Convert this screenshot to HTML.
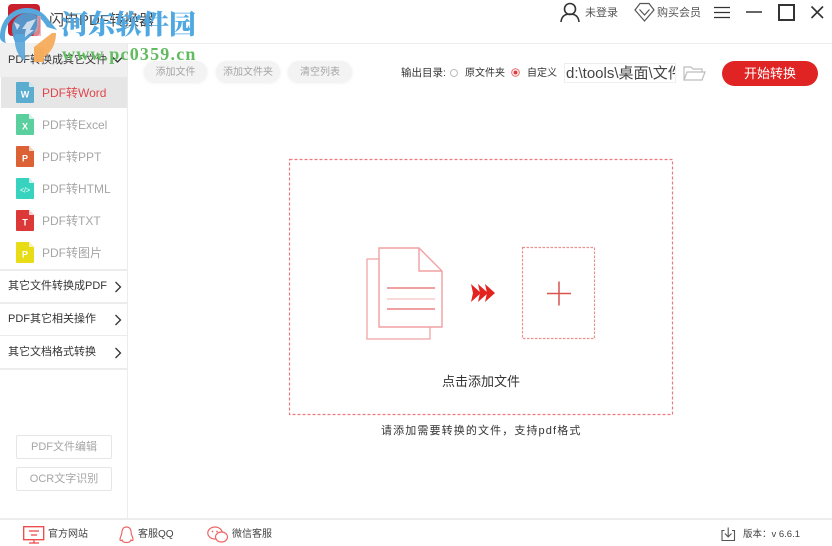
<!DOCTYPE html>
<html lang="zh">
<head>
<meta charset="utf-8">
<style>
html,body{margin:0;padding:0;background:#fff}
body{width:832px;height:546px;position:relative;overflow:hidden;font-family:"Liberation Sans","Noto Sans CJK SC",sans-serif;color:#333}
#w{position:absolute;left:0;top:0;width:832px;height:546px;filter:blur(.3px)}
.a{position:absolute;white-space:nowrap;line-height:1}
.tool{position:absolute;top:61px;height:21px;border-radius:11px;background:#f3f3f3;box-shadow:0 1px 3px rgba(0,0,0,.08);color:#a5a5a5;font-size:10px;line-height:24px;text-align:center}
.item{position:absolute;left:42px;font-size:12px;line-height:1;color:#a5a5a5;white-space:nowrap}
.sec{position:absolute;left:8px;font-size:11px;line-height:1;color:#333;white-space:nowrap}
.line{position:absolute;left:0;width:127px;height:1px;background:#ececec}
.sb{position:absolute;left:16px;width:94px;height:22px;border:1px solid #e6e6e6;border-radius:2px;color:#a5a5a5;font-size:11px;line-height:23px;text-align:center}
svg{position:absolute;overflow:visible}
</style>
</head>
<body>
<div id="w">
<!-- structure -->
<div class="a" style="left:0;top:43px;width:832px;height:1px;background:#eee"></div>
<div class="a" style="left:127px;top:43px;width:1px;height:475px;background:#ececec"></div>
<div class="a" style="left:0;top:44px;width:127px;height:33px;background:#f0f0f0"></div>
<div class="a" style="left:1px;top:77px;width:126px;height:31px;background:#e6e6e6"></div>
<div class="a" style="left:0;top:518px;width:832px;height:2px;background:#ececec"></div>

<!-- app logo -->
<div class="a" style="left:8px;top:4px;width:32px;height:32px;border-radius:4px;background:#c8202c"></div>
<div class="a" style="left:49px;top:13px;font-size:15px;color:#444">闪电PDF转换器</div>

<!-- sidebar -->
<div class="sec" style="top:55px">PDF转换成其它文件</div>
<svg style="left:112px;top:56px" width="12" height="8"><path d="M1 1.5L5.5 6L10 1.5" fill="none" stroke="#333" stroke-width="1.3"/></svg>

<svg style="left:16px;top:82px" width="19" height="22"><path d="M0 1Q0 0 1 0H13L18 5V20Q18 21 17 21H1Q0 21 0 20Z" fill="#5badd0"/><path d="M13 0L18 5H13Z" fill="#cfe6f0"/><text x="9" y="15.5" font-size="9" font-weight="bold" fill="#fff" text-anchor="middle" font-family="Liberation Sans">W</text></svg>
<div class="item" style="top:87px;color:#e0474c">PDF转Word</div>

<svg style="left:16px;top:114px" width="19" height="22"><path d="M0 1Q0 0 1 0H13L18 5V20Q18 21 17 21H1Q0 21 0 20Z" fill="#5ccf9f"/><path d="M13 0L18 5H13Z" fill="#d3f2e5"/><text x="9" y="15.5" font-size="9" font-weight="bold" fill="#fff" text-anchor="middle" font-family="Liberation Sans">X</text></svg>
<div class="item" style="top:119px">PDF转Excel</div>

<svg style="left:16px;top:146px" width="19" height="22"><path d="M0 1Q0 0 1 0H13L18 5V20Q18 21 17 21H1Q0 21 0 20Z" fill="#dc6236"/><path d="M13 0L18 5H13Z" fill="#f5d5c8"/><text x="9" y="15.5" font-size="9" font-weight="bold" fill="#fff" text-anchor="middle" font-family="Liberation Sans">P</text></svg>
<div class="item" style="top:151px">PDF转PPT</div>

<svg style="left:16px;top:178px" width="19" height="22"><path d="M0 1Q0 0 1 0H13L18 5V20Q18 21 17 21H1Q0 21 0 20Z" fill="#37d3bf"/><path d="M13 0L18 5H13Z" fill="#c9f3ed"/><text x="9" y="14.5" font-size="7" fill="#fff" text-anchor="middle" font-family="Liberation Sans">&lt;/&gt;</text></svg>
<div class="item" style="top:183px">PDF转HTML</div>

<svg style="left:16px;top:210px" width="19" height="22"><path d="M0 1Q0 0 1 0H13L18 5V20Q18 21 17 21H1Q0 21 0 20Z" fill="#dc3838"/><path d="M13 0L18 5H13Z" fill="#f6cfcf"/><text x="9" y="15.5" font-size="9" font-weight="bold" fill="#fff" text-anchor="middle" font-family="Liberation Sans">T</text></svg>
<div class="item" style="top:215px">PDF转TXT</div>

<svg style="left:16px;top:242px" width="19" height="22"><path d="M0 1Q0 0 1 0H13L18 5V20Q18 21 17 21H1Q0 21 0 20Z" fill="#e8dc17"/><path d="M13 0L18 5H13Z" fill="#f7f3b5"/><text x="9" y="15.5" font-size="9" font-weight="bold" fill="#fff" text-anchor="middle" font-family="Liberation Sans">P</text></svg>
<div class="item" style="top:247px">PDF转图片</div>

<div class="line" style="top:269px;height:2px"></div>
<div class="sec" style="top:281px">其它文件转换成PDF</div>
<svg style="left:114px;top:281px" width="8" height="12"><path d="M1.5 1L6.5 6L1.5 11" fill="none" stroke="#333" stroke-width="1.3"/></svg>
<div class="line" style="top:302px;height:2px"></div>
<div class="sec" style="top:314px">PDF其它相关操作</div>
<svg style="left:114px;top:314px" width="8" height="12"><path d="M1.5 1L6.5 6L1.5 11" fill="none" stroke="#333" stroke-width="1.3"/></svg>
<div class="line" style="top:335px"></div>
<div class="sec" style="top:347px">其它文档格式转换</div>
<svg style="left:114px;top:347px" width="8" height="12"><path d="M1.5 1L6.5 6L1.5 11" fill="none" stroke="#333" stroke-width="1.3"/></svg>
<div class="line" style="top:368px;height:2px"></div>

<div class="sb" style="top:435px">PDF文件编辑</div>
<div class="sb" style="top:467px">OCR文字识别</div>

<!-- toolbar -->
<div class="tool" style="left:144px;width:63px">添加文件</div>
<div class="tool" style="left:216px;width:64px">添加文件夹</div>
<div class="tool" style="left:288px;width:64px">清空列表</div>

<div class="a" style="left:401px;top:68px;font-size:10.5px;color:#333">输出目录:</div>
<div class="a" style="left:450px;top:69px;width:6px;height:6px;border:1px solid #bbb;border-radius:50%"></div>
<div class="a" style="left:465px;top:69px;font-size:10px;color:#333">原文件夹</div>
<svg style="left:511px;top:68px" width="10" height="10"><circle cx="4.5" cy="4.5" r="3.8" fill="none" stroke="#e8686a"/><circle cx="4.5" cy="4.5" r="2" fill="#e23c3e"/></svg>
<div class="a" style="left:527px;top:69px;font-size:10px;color:#333">自定义</div>
<div class="a" style="left:564px;top:63px;width:112px;height:20px;border:1px solid #eee;box-sizing:border-box;overflow:hidden;font-size:15px;line-height:19px;color:#444;padding-left:1px">d:\tools\桌面\文件</div>
<svg style="left:683px;top:65px" width="23" height="17"><path d="M1 15V2H8L10 4H19V7M1 15L4 7H22L19 15Z" fill="none" stroke="#bdbdbd" stroke-width="1.2"/></svg>
<div class="a" style="left:722px;top:61px;width:96px;height:25px;border-radius:13px;background:#e02323;color:#fff;font-size:13px;line-height:26px;text-align:center">开始转换</div>

<!-- top right -->
<svg style="left:559px;top:1px" width="23" height="22"><circle cx="11" cy="8" r="5.5" fill="none" stroke="#333" stroke-width="1.6"/><path d="M2 21C2.5 15.5 6 13 11 13S19.5 15.5 20 21" fill="none" stroke="#333" stroke-width="1.6"/></svg>
<div class="a" style="left:585px;top:8px;font-size:11px;color:#555">未登录</div>
<svg style="left:634px;top:2px" width="21" height="20"><path d="M6 1.5H15L20 8L10.5 19L1 8Z" fill="none" stroke="#555" stroke-width="1.2"/><path d="M5.5 7.5L10.5 13L15.5 7.5" fill="none" stroke="#555" stroke-width="1.2"/></svg>
<div class="a" style="left:657px;top:8px;font-size:11px;color:#555">购买会员</div>
<svg style="left:713px;top:6px" width="18" height="13"><path d="M1 1.5H17M1 6.5H17M1 11.5H17" stroke="#333" stroke-width="1.3"/></svg>
<svg style="left:745px;top:6px" width="18" height="13"><path d="M1 6H17" stroke="#333" stroke-width="1.5"/></svg>
<div class="a" style="left:778px;top:4px;width:13px;height:13px;border:2px solid #333"></div>
<svg style="left:810px;top:5px" width="15" height="15"><path d="M1.5 1.5L13 13M13 1.5L1.5 13" stroke="#333" stroke-width="1.6"/></svg>

<!-- drop zone -->
<svg style="left:289px;top:159px" width="384" height="256"><rect x=".5" y=".5" width="383" height="255" fill="none" stroke="#ea7a7c" stroke-width="1.2" stroke-dasharray="3 2"/></svg>

<svg style="left:350px;top:235px" width="100" height="115">
<path d="M29 24H17V104H80V92" fill="none" stroke="#f0a5a5" stroke-width="1.3"/>
<path d="M29 13H69L92 36V92H29Z" fill="#fff" stroke="#f0a0a0" stroke-width="1.4"/>
<path d="M69 13V36H92" fill="none" stroke="#f0a0a0" stroke-width="1.4"/>
<path d="M37 53H85" stroke="#ea8080" stroke-width="1.6"/>
<path d="M37 64H85" stroke="#f2b0b0" stroke-width="1.1"/>
<path d="M37 74H85" stroke="#ea8080" stroke-width="1.6"/>
</svg>
<svg style="left:470px;top:283px" width="26" height="20"><path d="M1 1L11 10L1 19L3 10ZM8 1L18 10L8 19L10 10ZM15 1L25 10L15 19L17 10Z" fill="#e2231f"/></svg>
<svg style="left:522px;top:247px" width="74" height="93"><rect x=".5" y=".5" width="72" height="91" fill="none" stroke="#eb8f8f" stroke-width="1.2" stroke-dasharray="2.5 1.5"/><path d="M25 46.5H49M37 34.5V58.5" stroke="#d9534f" stroke-width="1.5"/></svg>

<div class="a" style="left:442px;top:375px;font-size:13px;color:#333">点击添加文件</div>
<div class="a" style="left:381px;top:426px;font-size:11px;color:#333;letter-spacing:1.12px">请添加需要转换的文件，支持pdf格式</div>

<!-- footer -->
<svg style="left:23px;top:526px" width="22" height="18"><rect x=".7" y=".7" width="20" height="13" fill="none" stroke="#e44" stroke-width="1.3"/><path d="M6 5H16M8 9H14M11 14V17M6 17H16" stroke="#e44" stroke-width="1.2" fill="none"/></svg>
<div class="a" style="left:48px;top:530px;font-size:10px;color:#444">官方网站</div>
<svg style="left:119px;top:526px" width="15" height="18"><path d="M7.5 1C4 1 2.8 4 2.8 7C2.8 9 1 11 1 13.5C1 15 2.5 14.5 3 14C3.5 16 5 16.5 7.5 16.5S11.5 16 12 14C12.5 14.5 14 15 14 13.5C14 11 12.2 9 12.2 7C12.2 4 11 1 7.5 1Z" fill="none" stroke="#e66" stroke-width="1.2"/></svg>
<div class="a" style="left:138px;top:530px;font-size:10px;color:#444">客服QQ</div>
<svg style="left:207px;top:526px" width="22" height="17"><ellipse cx="8" cy="7" rx="7.2" ry="6" fill="none" stroke="#e66" stroke-width="1.2"/><ellipse cx="14.5" cy="11" rx="6" ry="5" fill="#fff" stroke="#e66" stroke-width="1.2"/><circle cx="5.5" cy="5.5" r=".9" fill="#e66"/><circle cx="10" cy="5.5" r=".9" fill="#e66"/></svg>
<div class="a" style="left:232px;top:530px;font-size:10px;color:#444">微信客服</div>
<svg style="left:721px;top:527px" width="15" height="15"><path d="M3.5 3.5H1V13.5H13.5V3.5H11" fill="none" stroke="#555" stroke-width="1.1"/><path d="M7.2 .5V9.5M4 6.5L7.2 10L10.5 6.5" fill="none" stroke="#555" stroke-width="1.1"/></svg>
<div class="a" style="left:743px;top:530px;font-size:9.5px;color:#444">版本：v 6.6.1</div>

<!-- watermark -->
<svg style="left:0;top:0" width="60" height="66">
<!-- orange ring, lower right -->
<path d="M34 47L52 33L56 33C56 47 48 58 34 62Z" fill="#f4ac5c" opacity=".95"/>
<path d="M34 47H44V62H34Z" fill="#f4ac5c" opacity=".95"/>
<!-- outer blue arc -->
<path d="M0 37C0 20 12 8 27 8C36 8 43 12 48 19L57 30L47 27C42 18 35 13 27 13C15 13 5 23 5 36C5 39 5 41 6 43C2 42 0 40 0 37Z" fill="#57a8dd"/>
<!-- inner blue disc -->
<path d="M12 28C12 19 20 13 28 13C33 13 37 16 39 19L38 30L24 42H15C13 38 12 33 12 28Z" fill="#4d9ed6" opacity=".92"/>
<!-- white flash -->
<path d="M14 22L20 25L17 30ZM27 22L36 19L30 30L34 30L24 38L26 29L22 29Z" fill="#e9eef6" opacity=".8"/>
<!-- pink tint where the watermark overlays the icon -->
<path d="M37 16H41V36H33L37 26Z" fill="#e3a3a8" opacity=".75"/>
<!-- lower blue stem -->
<path d="M15 34H25V61C19 58 16 50 15 44Z" fill="#58a6da" opacity=".9"/>
</svg>
<div class="a" style="left:61px;top:9px;font-family:'Noto Serif CJK SC',serif;font-weight:900;font-size:27px;color:#4fa8e2">河东软件园</div>
<div class="a" style="left:62px;top:45px;font-family:'Liberation Serif',serif;font-weight:bold;font-size:18px;color:#62bb60;letter-spacing:1.2px">www.pc0359.cn</div>
</div>
</body>
</html>
